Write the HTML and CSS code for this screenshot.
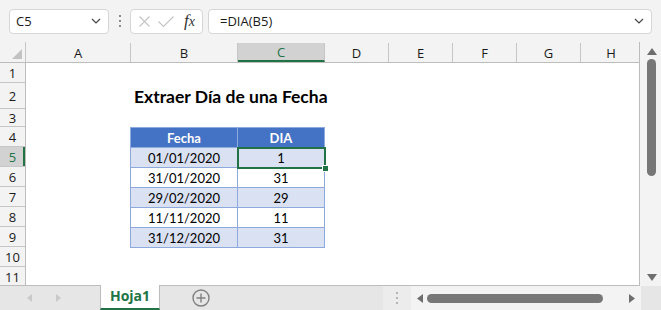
FILE: index.html
```html
<!DOCTYPE html>
<html lang="es">
<head>
  <meta charset="UTF-8">
  <title>Extraer Día de una Fecha</title>
  <link rel="stylesheet" href="styles.css">
</head>
<body>

<!-- Formula bar -->
<div class="formula-bar">
  <div class="box name-box">
    <span>C5</span>
    <svg class="chev" width="10" height="6" viewBox="0 0 10 6"><path d="M1 1l4 4 4-4"/></svg>
  </div>
  <div class="grip"><i></i><i></i><i></i></div>
  <div class="box fx-box">
    <svg width="11" height="11" viewBox="0 0 11 11"><path d="M0.5 0.5l10 10M10.5 0.5l-10 10"/></svg>
    <svg width="16" height="11" viewBox="0 0 16 11"><path d="M0.5 5.5l5 5 10-10"/></svg>
    <span class="fx"><i>f</i><i>x</i></span>
  </div>
  <div class="box formula-input">
    <span>=DIA(B5)</span>
    <svg class="chev" width="10" height="6" viewBox="0 0 10 6"><path d="M1 1l4 4 4-4"/></svg>
  </div>
</div>

<!-- Sheet -->
<div class="sheet">
  <div class="grid">
    <div class="col-heads">
      <div class="corner">
        <svg width="10" height="10" viewBox="0 0 10 10"><polygon points="10,0 10,10 0,10"/></svg>
      </div>
      <div class="ch col-a">A</div>
      <div class="ch col-b">B</div>
      <div class="ch col-c selected">C</div>
      <div class="ch col-n">D</div>
      <div class="ch col-n">E</div>
      <div class="ch col-n">F</div>
      <div class="ch col-n">G</div>
      <div class="ch col-h">H</div>
    </div>

    <div class="grid-body">
      <div class="row-heads">
        <div class="rh">1</div>
        <div class="rh tall">2</div>
        <div class="rh short">3</div>
        <div class="rh">4</div>
        <div class="rh selected">5</div>
        <div class="rh">6</div>
        <div class="rh">7</div>
        <div class="rh">8</div>
        <div class="rh">9</div>
        <div class="rh">10</div>
        <div class="rh">11</div>
      </div>

      <div class="cells">
        <div class="title">Extraer Día de una Fecha</div>
        <table class="data">
          <tr class="head"><th class="c-b">Fecha</th><th class="c-c">DIA</th></tr>
          <tr class="band"><td>01/01/2020</td><td class="sel">1</td></tr>
          <tr><td>31/01/2020</td><td>31</td></tr>
          <tr class="band"><td>29/02/2020</td><td>29</td></tr>
          <tr><td>11/11/2020</td><td>11</td></tr>
          <tr class="band"><td>31/12/2020</td><td>31</td></tr>
        </table>
      </div>
    </div>
  </div>

  <div class="vscroll">
    <svg class="arr" width="10" height="7" viewBox="0 0 10 7"><polygon points="5,0 10,7 0,7"/></svg>
    <div class="vthumb"></div>
    <div class="vspace"></div>
    <svg class="arr" width="10" height="7" viewBox="0 0 10 7"><polygon points="0,0 10,0 5,7"/></svg>
  </div>
</div>

<!-- Sheet tabs -->
<div class="tab-strip">
  <div class="tab-nav">
    <svg width="5" height="8" viewBox="0 0 5 8"><polygon points="5,0 5,8 0,4"/></svg>
    <svg width="5" height="8" viewBox="0 0 5 8"><polygon points="0,0 5,4 0,8"/></svg>
  </div>
  <div class="tab active">Hoja1</div>
  <div class="tab-add">
    <svg width="18" height="18" viewBox="0 0 18 18"><circle cx="9" cy="9" r="8"/><path d="M9 4.5v9M4.5 9h9"/></svg>
  </div>
  <div class="tab-grip"><i></i><i></i><i></i></div>
  <div class="hscroll">
    <svg width="6" height="9" viewBox="0 0 6 9"><polygon points="6,0 6,9 0,4.5"/></svg>
    <div class="hthumb"></div>
    <svg width="6" height="9" viewBox="0 0 6 9"><polygon points="0,0 6,4.5 0,9"/></svg>
  </div>
  <div class="tab-end"></div>
</div>

</body>
</html>
```

FILE: styles.css
```css
body {
  margin: 0;
  width: 661px;
  height: 310px;
  overflow: hidden;
  background: #f3f3f3;
  font-family: "Open Sans", "Noto Sans", sans-serif;
  font-size: 13px;
  color: #1a1a1a;
}

/* Formula bar */
.formula-bar {
  display: flex;
  align-items: center;
  height: 42px;
  padding: 0 9px;
  box-sizing: border-box;
}

.box {
  display: flex;
  align-items: center;
  height: 25px;
  box-sizing: border-box;
  background: #fff;
  border: 1px solid #d6d6d6;
  border-radius: 4px;
}

.chev path {
  fill: none;
  stroke: #444;
  stroke-width: 1.2;
}

.name-box {
  width: 100px;
  padding: 0 7px 0 6px;
  justify-content: space-between;
}

.grip {
  display: flex;
  flex-direction: column;
  gap: 3px;
  width: 21px;
  align-items: center;
}

.grip i {
  width: 2px;
  height: 2px;
  background: #8a8a8a;
}

.fx-box {
  width: 73px;
  padding: 0 6px 0 8px;
  gap: 8px;
}

.fx-box svg path {
  fill: none;
  stroke: #c4c4c4;
  stroke-width: 1.1;
}

.fx {
  font-family: "Liberation Serif", serif;
  font-style: italic;
  font-size: 17px;
  color: #333;
  margin-left: 2px;
}

.fx i {
  font-style: italic;
}

.fx i + i {
  font-size: 14px;
}

.formula-input {
  flex: 1;
  margin-left: 5px;
  padding: 0 7px 0 11px;
  justify-content: space-between;
}

/* Sheet */
.sheet {
  display: flex;
  height: 244px;
}

.grid {
  width: 640px;
  display: flex;
  flex-direction: column;
  background: #fff;
  border-right: 1px solid #bdbdbd;
  border-bottom: 1px solid #bdbdbd;
  box-sizing: border-box;
  overflow: hidden;
}

.col-heads {
  display: flex;
  height: 20px;
  background: #f3f3f3;
  border-bottom: 1px solid #bdbdbd;
}

.corner {
  width: 26px;
  flex: none;
  box-sizing: border-box;
  border-right: 1px solid #c6c6c6;
  display: flex;
  align-items: flex-end;
  justify-content: flex-end;
  padding: 0 3px 3px 0;
}

.corner polygon {
  fill: #c2c2c2;
}

.ch {
  flex: none;
  box-sizing: border-box;
  border-right: 1px solid #c6c6c6;
  text-align: center;
  line-height: 20px;
  margin-top: 1px;
}

.col-a { width: 105px; }
.col-b { width: 107px; }
.col-c { width: 87px; }
.col-n { width: 64px; }
.col-h { width: 60px; border-right: none; }

.ch.selected {
  background: #d2d2d2;
  color: #217346;
  border-bottom: 2px solid #217346;
  line-height: 18px;
}

.grid-body {
  display: flex;
  flex: 1;
}

.row-heads {
  width: 26px;
  flex: none;
  background: #f3f3f3;
  border-right: 1px solid #bdbdbd;
  box-sizing: border-box;
}

.rh {
  height: 20px;
  line-height: 20px;
  box-sizing: border-box;
  border-bottom: 1px solid #c6c6c6;
  text-align: center;
}

.rh.tall { height: 26px; line-height: 26px; }
.rh.short { height: 18px; line-height: 18px; }

.rh.selected {
  background: #d2d2d2;
  color: #217346;
  box-shadow: inset -2px 0 0 #217346;
}

.cells {
  flex: 1;
  padding: 20px 0 0 104px;
  font-family: Lato, "Open Sans", sans-serif;
  font-size: 13px;
  color: #000;
}

.title {
  height: 26px;
  line-height: 28px;
  padding-left: 4px;
  margin-bottom: 18px;
  font-weight: bold;
  font-size: 17.5px;
  white-space: nowrap;
}

/* Data table */
.data {
  border-collapse: collapse;
}

.data th,
.data td {
  height: 19px;
  padding: 0;
  text-align: center;
  border: 1px solid #8ea9db;
}

.data th {
  background: #4472c4;
  color: #fff;
  font-weight: bold;
}

.data .c-b { width: 106px; }
.data .c-c { width: 86px; }

.data .band td {
  background: #d9e1f2;
}

.data td.sel {
  position: relative;
}

.data td.sel::after {
  content: "";
  position: absolute;
  left: -1px;
  top: -1px;
  right: -2px;
  bottom: -2px;
  border: 2px solid #217346;
}

.data td.sel::before {
  content: "";
  position: absolute;
  right: -5px;
  bottom: -5px;
  width: 5px;
  height: 5px;
  background: #217346;
  border: 1px solid #fff;
  z-index: 1;
}

/* Vertical scrollbar */
.vscroll {
  width: 21px;
  display: flex;
  flex-direction: column;
  align-items: center;
  padding: 6px 0 5px 2px;
  box-sizing: border-box;
  background: #f3f3f3;
}

.arr polygon {
  fill: #6e6e6e;
}

.vthumb {
  width: 9px;
  height: 117px;
  margin-top: 4px;
  border-radius: 5px;
  background: #777;
}

.vspace {
  flex: 1;
}

/* Sheet tabs */
.tab-strip {
  display: flex;
  height: 24px;
  background: #e6e6e6;
}

.tab-nav {
  width: 100px;
  flex: none;
  display: flex;
  align-items: center;
  gap: 24px;
  padding-left: 27px;
  box-sizing: border-box;
}

.tab-nav polygon {
  fill: #c9c9c9;
}

.tab {
  width: 60px;
  flex: none;
  box-sizing: border-box;
  text-align: center;
  font-weight: bold;
  font-size: 14px;
  line-height: 22px;
  color: #217346;
  background: #fff;
  border-left: 1px solid #bdbdbd;
  border-right: 1px solid #bdbdbd;
  border-bottom: 2px solid #217346;
  margin-top: -1px;
}

.tab-add {
  width: 223px;
  flex: none;
  display: flex;
  align-items: center;
  padding-left: 32px;
  box-sizing: border-box;
}

.tab-add circle,
.tab-add path {
  fill: none;
  stroke: #808080;
  stroke-width: 1.4;
}

.tab-grip {
  width: 28px;
  flex: none;
  display: flex;
  flex-direction: column;
  justify-content: center;
  align-items: center;
  gap: 3px;
  background: #ececec;
}

.tab-grip i {
  width: 2px;
  height: 2px;
  background: #b4b4b4;
}

.hscroll {
  width: 230px;
  flex: none;
  display: flex;
  align-items: center;
  gap: 4px;
  padding: 0 6px;
  box-sizing: border-box;
  background: #f3f3f3;
}

.hscroll polygon {
  fill: #6e6e6e;
}

.hthumb {
  width: 176px;
  height: 9px;
  border-radius: 5px;
  background: #777;
  margin-right: auto;
}

.tab-end {
  flex: 1;
  background: #e6e6e6;
}
```
